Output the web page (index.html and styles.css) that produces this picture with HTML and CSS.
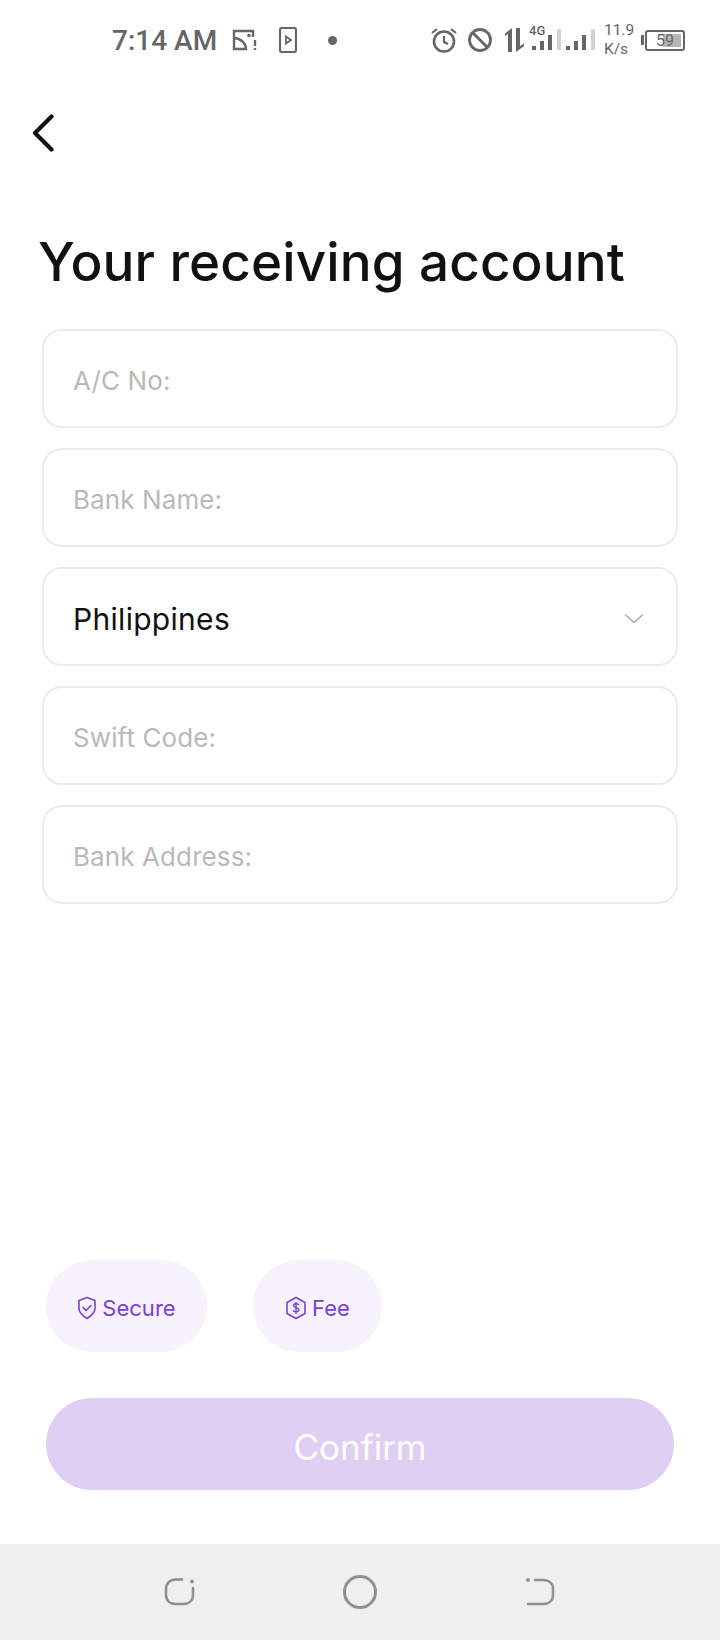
FILE: index.html
```html
<!DOCTYPE html>
<html lang="en">
<head>
    <meta charset="UTF-8">
    <meta name="viewport" content="width=device-width, initial-scale=1.0">
    <title>Your receiving account</title>
    <link rel="stylesheet" href="styles.css">
</head>
<body>
    <div class="page">
        <div class="status-bar">
            <span class="clock">7:14 AM</span>
            <svg class="st-cast" width="26" height="26" viewBox="0 0 26 26" fill="none" stroke="#666" stroke-width="2.400">
                <path d="M21 10V4H2v18h2M2 11c6 0 12 5 12 11H2"/>
                <circle cx="17" cy="8.500" r="1.800" fill="#666" stroke="none"/>
                <path d="M23 13v6M23 21v2"/>
            </svg>
            <svg class="st-play" width="18" height="26" viewBox="0 0 18 26" fill="none" stroke="#666" stroke-width="2.200">
                <rect x="1" y="1" width="16" height="24" rx="2"/>
                <path d="M7 9.500l5 3.500-5 3.500z" stroke-width="1.800"/>
            </svg>
            <span class="st-dot"></span>
            <div class="status-right">
                <svg width="28" height="28" viewBox="0 0 28 28" fill="none" stroke="#666" stroke-width="2.600">
                    <circle cx="14" cy="15.500" r="10"/>
                    <path d="M14 10v6l4 2" stroke-width="2.200"/>
                    <path d="M2 7l5-4M26 7l-5-4" stroke-width="2.200"/>
                </svg>
                <svg class="st-block" width="26" height="26" viewBox="0 0 26 26" fill="none" stroke="#666" stroke-width="2.800">
                    <circle cx="13" cy="13" r="10.500"/>
                    <path d="M5.500 5.500l15 15"/>
                </svg>
                <svg class="st-arrows" width="20" height="26" viewBox="0 0 20 26" fill="#666">
                    <path d="M7 1v24H3V7L0 9V6.500zM11 1h4v18l4-2.500v2.500l-8 6z"/>
                </svg>
                <div class="st-signal">
                    <span class="st-4g">4G</span>
                    <svg width="30" height="26" viewBox="0 0 30 26">
                        <rect x="0" y="19" width="4" height="4" fill="#666"/>
                        <rect x="8" y="14" width="4" height="9" fill="#666"/>
                        <rect x="16" y="8" width="4" height="15" fill="#666"/>
                        <rect x="25" y="2" width="4" height="21" fill="#d4d4d4"/>
                    </svg>
                </div>
                <svg class="st-bars" width="30" height="26" viewBox="0 0 30 26">
                    <rect x="0" y="19" width="4" height="4" fill="#666"/>
                    <rect x="8" y="14" width="4" height="9" fill="#666"/>
                    <rect x="16" y="8" width="4" height="15" fill="#666"/>
                    <rect x="25" y="2" width="4" height="21" fill="#d4d4d4"/>
                </svg>
                <div class="st-speed">11.9<br>K/s</div>
                <div class="st-battery">
                    <span class="st-cap"></span>
                    <div class="st-shell"><span class="st-fill"></span><span class="st-level">59</span></div>
                </div>
            </div>
        </div>

        <div class="top-nav">
            <svg width="26" height="38" viewBox="0 0 26 38" fill="none" stroke="#111" stroke-width="4.200" stroke-linecap="round" stroke-linejoin="round">
                <path d="M21.500 2.500L5 19l16.500 16.500"/>
            </svg>
        </div>

        <h1 class="title">Your receiving account</h1>

        <div class="form">
            <div class="field placeholder">A/C No:</div>
            <div class="field placeholder">Bank Name:</div>
            <div class="field">
                <span>Philippines</span>
                <svg width="20" height="12" viewBox="0 0 20 12" fill="none" stroke="#aaa" stroke-width="1.500">
                    <path d="M1 1.500l9 8 9-8"/>
                </svg>
            </div>
            <div class="field placeholder">Swift Code:</div>
            <div class="field placeholder">Bank Address:</div>
        </div>

        <div class="spacer"></div>

        <div class="pills">
            <div class="pill pill-secure">
                <svg width="20" height="24" viewBox="0 0 20 24" fill="none" stroke="#7c3fd0" stroke-width="1.600" stroke-linejoin="round">
                    <path d="M10 1.500l8 3v8c0 4.500-4 7.500-8 10-4-2.500-8-5.500-8-10v-8z"/>
                    <path d="M6 11.500l3 3 5-5" stroke-linecap="round"/>
                </svg>
                <span>Secure</span>
            </div>
            <div class="pill pill-fee">
                <svg width="22" height="24" viewBox="0 0 22 24" fill="none" stroke="#7c3fd0" stroke-width="1.600" stroke-linejoin="round">
                    <path d="M11 1.500l9 5v11l-9 5-9-5v-11z"/>
                    <path d="M14 9c-.5-1.500-5.500-2-5.500.5S14 11.500 14 14s-5.500 2-6 .5M11 6v12" stroke-width="1.400"/>
                </svg>
                <span>Fee</span>
            </div>
        </div>

        <button class="confirm-btn">Confirm</button>

        <div class="nav-bar">
            <svg width="32" height="30" viewBox="0 0 32 30" fill="none" stroke="#8f8f8f" stroke-width="2.600" stroke-linecap="round">
                <path d="M18 2.500h-6C6 2.500 2 6.500 2 12v6c0 5.500 4 9 10 9h7c6 0 10-3.500 10-9v-7"/>
                <circle cx="28" cy="4.500" r="2" fill="#8f8f8f" stroke="none"/>
            </svg>
            <span class="nav-home"></span>
            <svg width="32" height="30" viewBox="0 0 32 30" fill="none" stroke="#8f8f8f" stroke-width="2.600" stroke-linecap="round">
                <path d="M11 3h8c6 0 10 3.500 10 9v6c0 5.500-4 9-10 9H4"/>
                <circle cx="4" cy="3" r="2" fill="#8f8f8f" stroke="none"/>
            </svg>
        </div>
    </div>
</body>
</html>
```

FILE: styles.css
```css
* {
    box-sizing: border-box;
}
body {
    margin: 0;
    background: white;
    font-family: Inter, "Liberation Sans", sans-serif;
}
.page {
    width: 720px;
    height: 1640px;
    display: flex;
    flex-direction: column;
    overflow: hidden;
}

/* status bar */
.status-bar {
    height: 80px;
    display: flex;
    align-items: center;
    padding-left: 112px;
    color: #666;
}
.clock {
    font-family: Roboto, sans-serif;
    font-size: 28px;
    font-weight: 500;
    width: 120px;
}
.st-play {
    margin-left: 21px;
}
.st-dot {
    width: 9px;
    height: 9px;
    border-radius: 50%;
    background: #666;
    margin-left: 31px;
}
.status-right {
    display: flex;
    align-items: center;
    margin-left: 93px;
}
.st-block {
    margin-left: 9px;
}
.st-arrows {
    margin-left: 12px;
}
.st-signal {
    position: relative;
    margin-left: 7px;
}
.st-4g {
    position: absolute;
    left: -3px;
    top: -2px;
    font-family: Roboto, sans-serif;
    font-size: 13px;
    font-weight: 500;
    line-height: 12px;
}
.st-signal svg {
    display: block;
}
.st-bars {
    margin-left: 4px;
}
.st-speed {
    font-family: Roboto, sans-serif;
    font-size: 15.5px;
    line-height: 19px;
    margin-left: 8px;
    width: 37px;
}
.st-battery {
    display: flex;
    align-items: center;
}
.st-cap {
    width: 3px;
    height: 10px;
    background: #666;
}
.st-shell {
    position: relative;
    width: 40px;
    height: 21px;
    border: 2px solid #666;
    border-radius: 3px;
    margin-left: 1px;
}
.st-fill {
    position: absolute;
    left: 16px;
    right: 2px;
    top: 2px;
    bottom: 2px;
    background: #b5b5b5;
}
.st-level {
    position: absolute;
    left: 9px;
    top: 0;
    font-family: Roboto, sans-serif;
    font-size: 16px;
    line-height: 17px;
}

.top-nav {
    height: 60px;
    padding: 34px 0 0 30px;
}
.top-nav svg {
    display: block;
}

.title {
    margin: 90px 0 0 38px;
    font-size: 53px;
    line-height: 64px;
    font-weight: 500;
    color: #111;
    letter-spacing: 0.12px;
}

/* form */
.form {
    display: flex;
    flex-direction: column;
    gap: 20px;
    margin: 35px 42px 0;
}
.field {
    height: 99px;
    display: flex;
    align-items: center;
    justify-content: space-between;
    padding: 4px 32px 0 29px;
    border: 2px solid #ebebeb;
    border-radius: 20px;
    font-size: 30px;
    letter-spacing: 0.3px;
    color: #111;
}
.placeholder {
    font-size: 26px;
    letter-spacing: 0.1px;
    color: #b9b9b9;
}

.spacer {
    flex: 1;
}

.pills {
    display: flex;
    gap: 46px;
    padding-left: 46px;
}
.pill {
    height: 92px;
    border-radius: 46px;
    background: #f6f2fe;
    display: flex;
    align-items: center;
    justify-content: center;
    gap: 5px;
    padding-top: 3px;
    font-size: 22px;
    color: #7c3fd0;
}
.pill-secure {
    width: 161px;
}
.pill-fee {
    width: 129px;
}

.confirm-btn {
    display: block;
    height: 92px;
    margin: 46px 46px 54px;
    padding-top: 6px;
    border: none;
    border-radius: 46px;
    background: #decff3;
    color: white;
    font-family: Inter, sans-serif;
    font-size: 35px;
}

.nav-bar {
    height: 96px;
    background: #efefef;
    display: flex;
    align-items: center;
    justify-content: space-between;
    padding: 0 164px;
}
.nav-home {
    width: 34px;
    height: 34px;
    border: 3px solid #8f8f8f;
    border-radius: 50%;
}
```
